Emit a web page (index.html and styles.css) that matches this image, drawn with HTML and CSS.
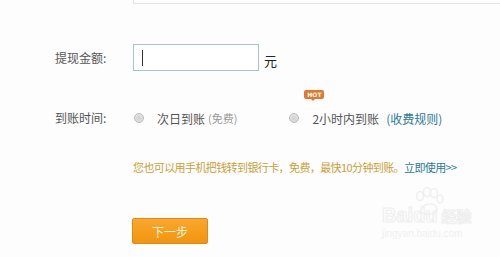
FILE: index.html
```html
<!DOCTYPE html>
<html>
<head>
<meta charset="utf-8">
<link rel="stylesheet" href="styles.css">
</head>
<body>
<div class="page">
  <div class="topbox"></div>
  <div class="form">
    <div class="row row-amount">
      <span class="label">提现金额:</span>
      <span class="input"><span class="caret"></span></span>
      <span class="unit">元</span>
    </div>
    <div class="row row-time">
      <span class="label">到账时间:</span>
      <span class="opt opt1"><span class="radio"></span><span class="opt-text">次日到账</span><span class="note">(免费)</span></span>
      <span class="opt opt2"><span class="radio"></span><span class="opt-text hot-wrap">2小时内到账<span class="hot">HOT</span></span><span class="rule">(收费规则)</span></span>
    </div>
    <div class="row row-hint">
      <span class="hint">您也可以用手机把钱转到银行卡，免费，最快10分钟到账。</span><span class="use">立即使用&gt;&gt;</span>
    </div>
    <div class="row row-btn">
      <span class="btn">下一步</span>
    </div>
  </div>
  <div class="wm">
    <svg class="paw" width="34" height="30" viewBox="0 0 34 30"><g fill="none" stroke="#efefef" stroke-width="1.5"><ellipse cx="8" cy="9" rx="3.5" ry="4.5"/><ellipse cx="15" cy="5" rx="3.5" ry="4.5"/><ellipse cx="22" cy="6" rx="3.5" ry="4.5"/><ellipse cx="28" cy="12" rx="3" ry="4"/><path d="M9 24 C9 16 23 14 25 22 C26 28 10 29 9 24 Z"/></g></svg>
    <div class="wm-line"><span class="wm-bai">Bai</span><span class="wm-du">du</span><span class="wm-jy">经验</span></div>
    <div class="wm-url">jingyan.baidu.com</div>
  </div>
</div>
</body>
</html>
```
FILE: styles.css
```css
html, body {
  margin: 0;
  padding: 0;
  background: #fdfdfd;
}
.page {
  position: relative;
  width: 500px;
  height: 257px;
  overflow: hidden;
  font-family: "Noto Sans CJK SC", "Liberation Sans", sans-serif;
  font-size: 12px;
  color: #444;
}
.topbox {
  margin-left: 133px;
  height: 3px;
  border-left: 1px solid #e6e6e6;
  border-bottom: 1px solid #e6e6e6;
  background: #fff;
}
.form {
  padding-left: 55px;
}
.row {
  display: flex;
  align-items: center;
}
.label {
  width: 78px;
  color: #555;
  line-height: 16px;
}
.row-amount {
  margin-top: 40px;
}
.input {
  box-sizing: border-box;
  width: 126px;
  height: 27px;
  border: 1px solid #a9c4cc;
  background: #fff;
  display: flex;
  align-items: center;
  padding-left: 8px;
}
.caret {
  width: 1px;
  height: 16px;
  background: #333;
}
.unit {
  margin-left: 5px;
  margin-top: 5px;
  font-size: 13px;
  color: #222;
}
.row-time {
  margin-top: 37px;
  height: 20px;
}
.opt {
  display: flex;
  align-items: center;
}
.radio {
  box-sizing: border-box;
  width: 10px;
  height: 10px;
  border-radius: 50%;
  border: 1px solid #b8b8b8;
  background: radial-gradient(circle at 50% 55%, #d2d2d2 0, #dadada 45%, #f2f2f2 100%);
  margin-left: 1px;
  margin-right: 13px;
}
.opt-text {
  color: #555;
}
.note {
  margin-left: 3px;
  font-size: 11px;
  color: #999;
}
.opt2 {
  margin-left: 51px;
}
.hot-wrap {
  position: relative;
}
.hot {
  position: absolute;
  left: -8px;
  top: -20px;
  width: 20px;
  height: 9px;
  border-radius: 2px;
  background: #e07a2a;
  color: #fff;
  font-family: "DejaVu Sans", sans-serif;
  font-size: 6px;
  font-weight: bold;
  line-height: 9px;
  text-align: center;
}
.hot::after {
  content: "";
  position: absolute;
  left: 7px;
  bottom: -2px;
  border-left: 2px solid transparent;
  border-right: 2px solid transparent;
  border-top: 2px solid #e07a2a;
}
.rule {
  margin-left: 7px;
  color: #2b7a97;
}
.row-hint {
  margin-top: 31px;
  padding-left: 78px;
  font-size: 11px;
  line-height: 16px;
  letter-spacing: -0.6px;
}
.hint {
  color: #caa038;
}
.use {
  color: #2b7a97;
}
.row-btn {
  margin-top: 43px;
  padding-left: 77px;
}
.btn {
  box-sizing: border-box;
  width: 76px;
  height: 26px;
  border: 1px solid #e08a12;
  border-radius: 2px;
  background: linear-gradient(#f9a72e, #f2950f);
  color: #fff5dc;
  font-size: 12px;
  display: flex;
  align-items: center;
  justify-content: center;
}
.wm {
  position: absolute;
  left: 382px;
  top: 205px;
  width: 118px;
}
.paw {
  position: absolute;
  left: 30px;
  top: -18px;
}
.wm-line {
  font-family: "Liberation Sans", sans-serif;
  font-size: 20px;
  font-weight: bold;
  line-height: 20px;
  color: transparent;
  -webkit-text-stroke: 1px #eeeeee;
}
.wm-jy {
  font-family: "Noto Sans CJK SC", sans-serif;
  font-size: 15px;
  margin-left: 4px;
}
.wm-url {
  font-family: "Liberation Sans", sans-serif;
  font-size: 10px;
  color: #f0f0f0;
  margin-top: 2px;
}
```
